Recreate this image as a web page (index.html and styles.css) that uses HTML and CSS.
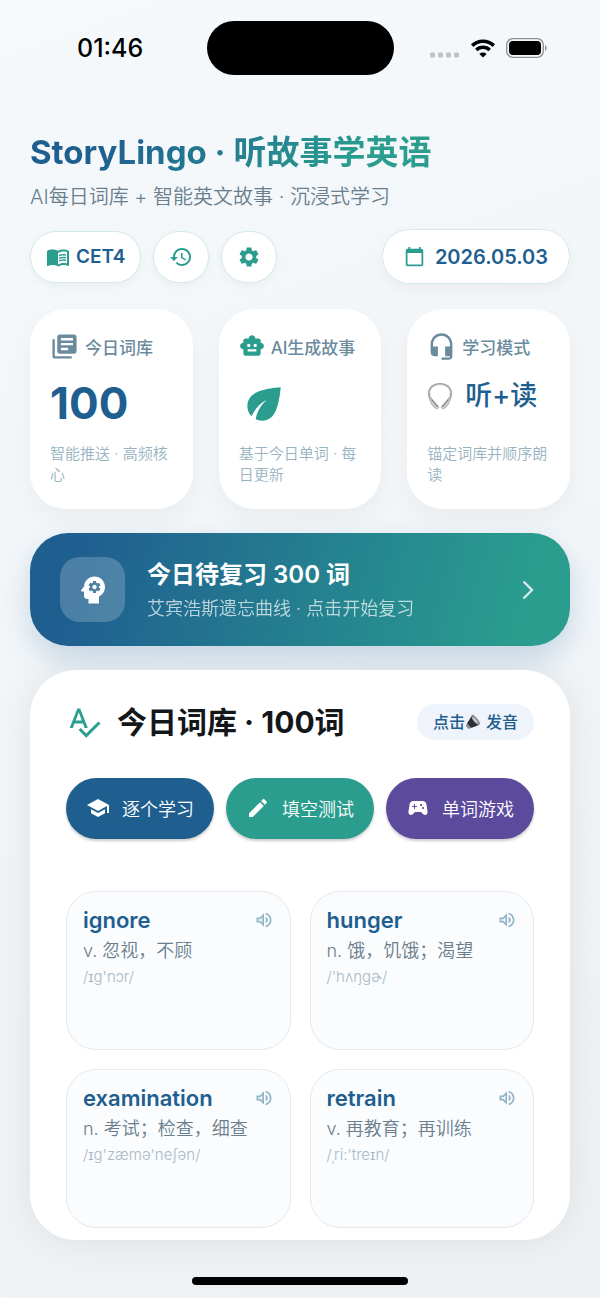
FILE: index.html
```html
<!DOCTYPE html>
<html lang="zh-CN">
<head>
    <meta charset="UTF-8">
    <meta name="viewport" content="width=device-width, initial-scale=1.0">
    <title>StoryLingo</title>
    <link rel="stylesheet" href="styles.css">
</head>
<body>
    <svg class="sprite" aria-hidden="true">
        <symbol id="speaker" viewBox="0 0 24 24">
            <path d="M3 9v6h4l5 5V4L7 9H3zm7-.17v6.34L7.83 13H5v-2h2.83L10 8.83zM16.5 12c0-1.77-1.02-3.29-2.5-4.03v8.05c1.48-.73 2.5-2.25 2.5-4.02zM14 3.23v2.06c2.89.86 5 3.54 5 6.71s-2.11 5.85-5 6.71v2.06c4.01-.91 7-4.49 7-8.77s-2.99-7.86-7-8.77z"/>
        </symbol>
    </svg>

    <div class="status-bar">
        <span class="time">01:46</span>
        <span class="island"></span>
        <span class="status-icons">
            <svg class="signal" viewBox="0 0 30 6">
                <rect x="0" y="0.5" width="5" height="5" rx="1.5"/>
                <rect x="8" y="0.5" width="5" height="5" rx="1.5"/>
                <rect x="16" y="0.5" width="5" height="5" rx="1.5"/>
                <rect x="24" y="0.5" width="5" height="5" rx="1.5"/>
            </svg>
            <svg class="wifi" viewBox="0 0 26 20">
                <path d="M2.2 7.6a15.5 15.5 0 0 1 21.6 0" fill="none" stroke="#000" stroke-width="3.6"/>
                <path d="M6.3 12a9.6 9.6 0 0 1 13.4 0" fill="none" stroke="#000" stroke-width="3.4"/>
                <path d="M13 19.5l-3.6-3.6a5.2 5.2 0 0 1 7.2 0z"/>
            </svg>
            <svg class="battery" viewBox="0 0 41 20">
                <rect x=".7" y=".7" width="36.6" height="18.6" rx="6" fill="none" stroke="#8d9093" stroke-width="1.3"/>
                <rect x="3" y="3" width="32" height="14" rx="4"/>
                <path d="M39 7c2.2 1 2.2 5 0 6z" fill="#8d9093"/>
            </svg>
        </span>
    </div>

    <main class="container">
        <h1>StoryLingo · 听故事学英语</h1>
        <p class="subtitle">AI每日词库 + 智能英文故事 · 沉浸式学习</p>

        <div class="toolbar">
            <button class="chip">
                <svg class="icon-m" viewBox="0 0 24 24"><path d="M21 5c-1.11-.35-2.33-.5-3.5-.5-1.95 0-4.05.4-5.5 1.5-1.45-1.1-3.55-1.5-5.5-1.5S2.45 4.9 1 6v14.65c0 .25.25.5.5.5.1 0 .15-.05.25-.05C3.1 20.45 5.05 20 6.5 20c1.95 0 4.05.4 5.5 1.5 1.35-.85 3.8-1.5 5.5-1.5 1.65 0 3.35.3 4.75 1.05.1.05.15.05.25.05.25 0 .5-.25.5-.5V6c-.6-.45-1.25-.75-2-1zm0 13.5c-1.1-.35-2.3-.5-3.5-.5-1.7 0-4.15.65-5.5 1.5V8c1.35-.85 3.8-1.5 5.5-1.5 1.2 0 2.4.15 3.5.5v11.5z"/><path d="M17.5 10.5c.88 0 1.73.09 2.5.26V9.24c-.79-.15-1.64-.24-2.5-.24-1.7 0-3.24.29-4.5.83v1.66c1.13-.64 2.7-.99 4.5-.99zM13 12.49v1.66c1.13-.64 2.7-.99 4.5-.99.88 0 1.73.09 2.5.26V11.9c-.79-.15-1.64-.24-2.5-.24-1.7 0-3.24.3-4.5.83zm4.5 1.84c-1.7 0-3.24.29-4.5.83v1.66c1.13-.64 2.7-.99 4.5-.99.88 0 1.73.09 2.5.26v-1.52c-.79-.16-1.64-.24-2.5-.24z"/></svg>
                CET4
            </button>
            <button class="chip chip-round" aria-label="历史">
                <svg class="icon-m" viewBox="0 0 24 24"><path d="M13 3c-4.97 0-9 4.03-9 9H1l3.89 3.89.07.14L9 12H6c0-3.87 3.13-7 7-7s7 3.13 7 7-3.13 7-7 7c-1.93 0-3.68-.79-4.94-2.06l-1.42 1.42C8.27 19.99 10.51 21 13 21c4.97 0 9-4.03 9-9s-4.03-9-9-9zm-1 5v5l4.28 2.54.72-1.21-3.5-2.08V8H12z"/></svg>
            </button>
            <button class="chip chip-round" aria-label="设置">
                <svg class="icon-m" viewBox="0 0 24 24"><path d="M19.14 12.94c.04-.3.06-.61.06-.94 0-.32-.02-.64-.07-.94l2.03-1.58c.18-.14.23-.41.12-.61l-1.92-3.32c-.12-.22-.37-.29-.59-.22l-2.39.96c-.5-.38-1.03-.7-1.62-.94l-.36-2.54c-.04-.24-.24-.41-.48-.41h-3.84c-.24 0-.43.17-.47.41l-.36 2.54c-.59.24-1.13.57-1.62.94l-2.39-.96c-.22-.08-.47 0-.59.22L2.74 8.87c-.12.21-.08.47.12.61l2.03 1.58c-.05.3-.09.63-.09.94s.02.64.07.94l-2.03 1.58c-.18.14-.23.41-.12.61l1.92 3.32c.12.22.37.29.59.22l2.39-.96c.5.38 1.03.7 1.62.94l.36 2.54c.05.24.24.41.48.41h3.84c.24 0 .44-.17.47-.41l.36-2.54c.59-.24 1.13-.56 1.62-.94l2.39.96c.22.08.47 0 .59-.22l1.92-3.32c.12-.22.07-.47-.12-.61l-2.01-1.58zM12 15.6c-1.98 0-3.6-1.62-3.6-3.6s1.62-3.6 3.6-3.6 3.6 1.62 3.6 3.6-1.62 3.6-3.6 3.6z"/></svg>
            </button>
            <button class="chip chip-date">
                <svg class="icon-s" viewBox="0 0 24 24"><path d="M20 3h-1V1h-2v2H7V1H5v2H4c-1.1 0-2 .9-2 2v16c0 1.1.9 2 2 2h16c1.1 0 2-.9 2-2V5c0-1.1-.9-2-2-2zm0 18H4V8h16v13z"/></svg>
                2026.05.03
            </button>
        </div>

        <div class="stats">
            <section class="stat">
                <h2>
                    <svg class="icon-l" viewBox="0 0 24 24"><path d="M4 6H2v14c0 1.1.9 2 2 2h14v-2H4V6zm16-4H8c-1.1 0-2 .9-2 2v12c0 1.1.9 2 2 2h12c1.1 0 2-.9 2-2V4c0-1.1-.9-2-2-2zm-1 9H9V9h10v2zm-4 4H9v-2h6v2zm4-8H9V5h10v2z"/></svg>
                    今日词库
                </h2>
                <div class="number">100</div>
                <p>智能推送 · 高频核心</p>
            </section>
            <section class="stat">
                <h2>
                    <svg class="icon-ml green" viewBox="0 0 24 24"><path d="M20 9V7c0-1.1-.9-2-2-2h-3c0-1.66-1.34-3-3-3S9 3.34 9 5H6c-1.1 0-2 .9-2 2v2c-1.66 0-3 1.34-3 3s1.34 3 3 3v4c0 1.1.9 2 2 2h12c1.1 0 2-.9 2-2v-4c1.66 0 3-1.34 3-3s-1.34-3-3-3zM7.5 11.5c0-.83.67-1.5 1.5-1.5s1.5.67 1.5 1.5S9.83 13 9 13s-1.5-.67-1.5-1.5zM16 17H8v-2h8v2zm-1-4c-.83 0-1.5-.67-1.5-1.5S14.17 10 15 10s1.5.67 1.5 1.5S15.83 13 15 13z"/></svg>
                    AI生成故事
                </h2>
                <div class="number">
                    <svg class="leaf green" viewBox="0 0 24 24"><path d="M6.05 8.05c-2.73 2.73-2.73 7.15-.02 9.88 1.47-3.4 4.09-6.24 7.36-7.93-2.77 2.34-4.71 5.61-5.39 9.32 2.6 1.23 5.8.78 7.95-1.37C19.43 14.47 20 4 20 4S9.53 4.57 6.05 8.05z"/></svg>
                </div>
                <p>基于今日单词 · 每日更新</p>
            </section>
            <section class="stat">
                <h2>
                    <svg class="icon-l" viewBox="0 0 24 24"><path d="M12 1c-4.97 0-9 4.03-9 9v7c0 1.66 1.34 3 3 3h3v-8H5v-2c0-3.87 3.13-7 7-7s7 3.13 7 7v2h-4v8h4v1h-7v2h6c1.66 0 3-1.34 3-3V10c0-4.97-4.03-9-9-9z"/></svg>
                    学习模式
                </h2>
                <div class="mode">
                    <svg class="headphones" viewBox="0 0 26 28">
                        <path d="M3.2 17C-1 8 5 1.8 13 1.8S27 8 22.8 17" fill="none" stroke="#a3a3a3" stroke-width="1.8"/>
                        <path d="M4.5 16C1 8.5 6.5 3 13 3s12 5.5 8.5 13" fill="none" stroke="#e2e2e2" stroke-width=".8"/>
                        <path d="M3.4 15.2l8 9.3c.8 1-.8 2.7-2 2.2-3.5-1.5-6-6-6.8-10.2z" fill="#d3d3d3" stroke="#9a9a9a" stroke-width=".8"/>
                        <path d="M22.6 15.2l-8 9.3c-.8 1 .8 2.7 2 2.2 3.5-1.5 6-6 6.8-10.2z" fill="#d3d3d3" stroke="#9a9a9a" stroke-width=".8"/>
                        <path d="M4.5 17.5l6 7.5M21.5 17.5l-6 7.5" stroke="#858585" stroke-width="1.2"/>
                    </svg>
                    听+读
                </div>
                <p>锚定词库并顺序朗读</p>
            </section>
        </div>

        <a class="review" href="#">
            <span class="review-icon">
                <svg class="icon-xl" viewBox="0 0 24 24"><path d="M13 8.57c-.79 0-1.43.64-1.43 1.43s.64 1.43 1.43 1.43 1.43-.64 1.43-1.43-.64-1.43-1.43-1.43z"/><path d="M13 3C9.25 3 6.2 5.94 6.02 9.64L4.1 12.2c-.25.33-.01.8.4.8H6v3c0 1.1.9 2 2 2h1v3h7v-4.68c2.36-1.12 4-3.53 4-6.32 0-3.87-3.13-7-7-7zm3 7c0 .13-.01.26-.02.39l.83.66c.08.06.1.16.05.25l-.8 1.39c-.05.09-.16.12-.24.09l-.99-.4c-.21.16-.43.29-.67.39L14 13.83c-.01.1-.1.17-.2.17h-1.6c-.1 0-.18-.07-.2-.17l-.15-1.06c-.25-.1-.47-.23-.68-.39l-.99.4c-.09.03-.2 0-.25-.09l-.8-1.39c-.05-.08-.03-.19.05-.25l.84-.66c-.01-.13-.02-.26-.02-.39s.02-.27.04-.39l-.85-.66c-.08-.06-.1-.16-.05-.26l.8-1.38c.05-.09.15-.12.24-.09l1 .4c.2-.15.43-.29.67-.39L12 6.17c.02-.1.1-.17.2-.17h1.6c.1 0 .18.07.2.17l.15 1.06c.24.1.46.23.67.39l1-.4c.09-.03.2 0 .24.09l.8 1.38c.05.09.03.2-.05.26l-.85.66c.03.12.04.25.04.39z"/></svg>
            </span>
            <span class="review-text">
                <strong>今日待复习 300 词</strong>
                <small>艾宾浩斯遗忘曲线 · 点击开始复习</small>
            </span>
            <svg class="arrow" viewBox="0 0 12 20"><path d="M1.5 1.5L10 10l-8.5 8.5" fill="none" stroke="currentColor" stroke-width="2.4"/></svg>
        </a>

        <section class="panel">
            <header class="panel-head">
                <svg class="spell green" viewBox="0 0 24 24"><path d="M12.45 16h2.09L9.43 3H7.57L2.46 16h2.09l1.12-3h5.64l1.14 3zm-6.02-5L8.5 5.48 10.57 11H6.43zm15.16.59l-8.09 8.09L9.83 16l-1.41 1.41 5.09 5.09L23 13l-1.41-1.41z"/></svg>
                <h2>今日词库 · 100词</h2>
                <span class="hint">点击<svg class="hint-icon" viewBox="0 0 16 16">
                        <path d="M7 .5c1.5-.8 8.500 6.5 8 9.5-.3 1.5-2.500 1-4.500-1C8 6.500 5.500 1.500 7 .5z" fill="#8b8f93"/>
                        <path d="M6.500 2L2 9.500 6 14l8-3C10.500 10 7 6 6.500 2z" fill="#2e3033"/>
                        <path d="M2 9.500L.8 11.800 3.500 15 6 14z" fill="#85898d"/>
                        <path d="M8 4l4.500 4.500" stroke="#d5d8da" stroke-width="1.500"/>
                    </svg> 发音</span>
            </header>

            <div class="actions">
                <button class="action blue">
                    <svg class="icon-m" viewBox="0 0 24 24"><path d="M5 13.18v4L12 21l7-3.82v-4L12 17l-7-3.82zM12 3L1 9l11 6 9-4.91V17h2V9L12 3z"/></svg>
                    逐个学习
                </button>
                <button class="action teal">
                    <svg class="icon-m" viewBox="0 0 24 24"><path d="M3 17.25V21h3.75L17.81 9.94l-3.75-3.75L3 17.25zM20.71 7.04c.39-.39.39-1.02 0-1.41l-2.34-2.34c-.39-.39-1.02-.39-1.41 0l-1.83 1.83 3.75 3.75 1.83-1.83z"/></svg>
                    填空测试
                </button>
                <button class="action purple">
                    <svg class="icon-m" viewBox="0 0 24 24"><path d="M21.58 16.09l-1.09-7.66C20.21 6.46 18.52 5 16.53 5H7.47C5.48 5 3.79 6.46 3.51 8.43l-1.09 7.66C2.2 17.63 3.39 19 4.94 19c.68 0 1.32-.27 1.8-.75L9 16h6l2.25 2.25c.48.48 1.13.75 1.8.75 1.56 0 2.75-1.37 2.53-2.91zM11 11H9v2H8v-2H6v-1h2V8h1v2h2v1zm4-1c-.55 0-1-.45-1-1s.45-1 1-1 1 .45 1 1-.45 1-1 1zm2 3c-.55 0-1-.45-1-1s.45-1 1-1 1 .45 1 1-.45 1-1 1z"/></svg>
                    单词游戏
                </button>
            </div>

            <div class="words">
                <article class="word">
                    <div class="word-head">
                        <h3>ignore</h3>
                        <button class="speak" aria-label="ignore"><svg class="icon-xs"><use href="#speaker"/></svg></button>
                    </div>
                    <p class="meaning">v. 忽视，不顾</p>
                    <p class="phonetic">/ɪg'nɔr/</p>
                </article>
                <article class="word">
                    <div class="word-head">
                        <h3>hunger</h3>
                        <button class="speak" aria-label="hunger"><svg class="icon-xs"><use href="#speaker"/></svg></button>
                    </div>
                    <p class="meaning">n. 饿，饥饿；渴望</p>
                    <p class="phonetic">/'hʌŋgɚ/</p>
                </article>
                <article class="word">
                    <div class="word-head">
                        <h3>examination</h3>
                        <button class="speak" aria-label="examination"><svg class="icon-xs"><use href="#speaker"/></svg></button>
                    </div>
                    <p class="meaning">n. 考试；检查，细查</p>
                    <p class="phonetic">/ɪg'zæmə'neʃən/</p>
                </article>
                <article class="word">
                    <div class="word-head">
                        <h3>retrain</h3>
                        <button class="speak" aria-label="retrain"><svg class="icon-xs"><use href="#speaker"/></svg></button>
                    </div>
                    <p class="meaning">v. 再教育；再训练</p>
                    <p class="phonetic">/ˌri:'treɪn/</p>
                </article>
            </div>
        </section>
    </main>

    <div class="home-indicator"></div>
</body>
</html>
```
FILE: styles.css
```css
* {
    box-sizing: border-box;
}
body {
    margin: 0;
    font-family: Inter, "Noto Sans CJK SC", sans-serif;
    background: linear-gradient(160deg, #f5f9fc, #edf1f4);
    color: #14171a;
}
h1, h2, h3, p {
    margin: 0;
}
button {
    font-family: inherit;
    border: none;
    cursor: pointer;
}
svg {
    fill: currentColor;
    flex-shrink: 0;
}
.sprite {
    display: none;
}
.green {
    color: #2a9d8f;
}

/* Icon sizes */
.icon-xs { width: 20px; height: 20px; }
.icon-s { width: 21px; height: 21px; }
.icon-m { width: 24px; height: 24px; }
.icon-ml { width: 26px; height: 26px; }
.icon-l { width: 29px; height: 29px; }
.icon-xl { width: 36px; height: 36px; }

/* Phone status bar */
.status-bar {
    display: grid;
    grid-template-columns: 1fr 187px 1fr;
    align-items: center;
    padding-top: 21px;
    color: #000;
}
.time {
    padding-left: 77px;
    font-size: 25px;
    font-weight: 500;
}
.island {
    height: 54px;
    border-radius: 27px;
    background: #000;
}
.status-icons {
    display: flex;
    align-items: center;
    justify-content: flex-end;
    gap: 10px;
    padding-right: 53px;
}
.signal {
    width: 30px;
    height: 6px;
    margin-top: 13px;
    fill: #bfc2c5;
}
.wifi { width: 26px; height: 20px; }
.battery { width: 41px; height: 20px; }

/* Header */
.container {
    padding: 57px 30px 0;
}
h1 {
    width: fit-content;
    font-size: 33px;
    line-height: 40px;
    font-weight: 700;
    background: linear-gradient(135deg, #1f5f90 20%, #2a9d8f 80%);
    background-clip: text;
    -webkit-background-clip: text;
    color: transparent;
}
.subtitle {
    margin-top: 13px;
    font-size: 20px;
    line-height: 24px;
    font-weight: 350;
    color: #6a7e8d;
}
.toolbar {
    display: flex;
    align-items: center;
    gap: 12px;
    margin-top: 20px;
}
.chip {
    display: flex;
    align-items: center;
    justify-content: center;
    gap: 6px;
    height: 52px;
    padding: 0 15px;
    border: 1px solid #d3ebe8;
    border-radius: 28px;
    background: #fff;
    box-shadow: 0 3px 8px rgba(0, 0, 0, 0.04);
    color: #1f5f90;
    font-size: 19px;
    font-weight: 600;
}
.chip svg {
    color: #2a9d8f;
}
.chip-round {
    width: 56px;
    padding: 0;
}
.chip-date {
    height: 55px;
    margin-left: auto;
    padding: 0 21px;
    gap: 10px;
    box-shadow: 0 6px 16px rgba(0, 0, 0, 0.04);
    font-size: 20px;
}

/* Stat cards */
.stats {
    display: grid;
    grid-template-columns: repeat(3, 1fr);
    gap: 26px;
    margin-top: 25px;
}
.stat {
    display: flex;
    flex-direction: column;
    min-height: 200px;
    padding: 22px 12px 24px 20px;
    border-radius: 36px;
    background: #fff;
    box-shadow: 0 10px 24px rgba(0, 0, 0, 0.04);
}
.stat h2 {
    display: flex;
    align-items: center;
    gap: 6px;
    height: 30px;
    font-size: 17px;
    font-weight: 500;
    color: #6b8a9d;
    white-space: nowrap;
}
.number {
    height: 48px;
    margin-top: 18px;
    font-size: 44px;
    line-height: 48px;
    font-weight: 700;
    color: #1f5f90;
}
.leaf {
    display: block;
    width: 50px;
    height: 50px;
}
.mode {
    display: flex;
    align-items: center;
    gap: 12px;
    margin-top: 20px;
    font-size: 27px;
    line-height: 30px;
    font-weight: 500;
    color: #1f5f90;
}
.headphones {
    width: 26px;
    height: 28px;
}
.stat p {
    margin-top: auto;
    font-size: 15px;
    line-height: 21px;
    font-weight: 350;
    color: #97b3c2;
}

/* Review banner */
.review {
    display: flex;
    align-items: center;
    gap: 22px;
    margin-top: 24px;
    padding: 24px 36px 24px 30px;
    border-radius: 38px;
    background: linear-gradient(105deg, #1f5f90 10%, #2a9d8f 90%);
    box-shadow: 0 12px 28px rgba(31, 95, 144, 0.2);
    color: #fff;
    text-decoration: none;
}
.review-icon {
    display: grid;
    place-items: center;
    width: 65px;
    height: 65px;
    border-radius: 20px;
    background: rgba(255, 255, 255, 0.2);
}
.review-text {
    display: flex;
    flex-direction: column;
    flex: 1;
    gap: 6px;
    padding-top: 3px;
}
.review-text strong {
    font-size: 24px;
    line-height: 30px;
    font-weight: 600;
}
.review-text small {
    font-size: 18px;
    line-height: 26px;
    font-weight: 350;
    opacity: 0.7;
}
.arrow {
    width: 12px;
    height: 20px;
    opacity: 0.8;
}

/* Word list panel */
.panel {
    margin-top: 24px;
    padding: 33px 36px 12px;
    border-radius: 46px;
    background: #fff;
    box-shadow: 0 0 36px rgba(0, 0, 0, 0.08);
}
.panel-head {
    display: flex;
    align-items: center;
}
.spell {
    width: 36px;
    height: 36px;
}
.panel-head h2 {
    margin-left: 15px;
    font-size: 30px;
    line-height: 38px;
    font-weight: 700;
}
.hint {
    display: flex;
    align-items: center;
    margin-left: auto;
    padding: 0 16px;
    border-radius: 18px;
    background: #eff3fb;
    color: #1f5f90;
    font-size: 16px;
    line-height: 36px;
    font-weight: 500;
}
.hint-icon {
    width: 16px;
    height: 16px;
    margin-right: 5px;
}
.actions {
    display: grid;
    grid-template-columns: repeat(3, 1fr);
    gap: 12px;
    margin-top: 37px;
}
.action {
    display: flex;
    align-items: center;
    justify-content: center;
    gap: 12px;
    height: 61px;
    padding: 0 0 2px;
    border-radius: 31px;
    box-shadow: 0 2px 3px rgba(0, 0, 0, 0.2);
    color: #fff;
    font-size: 18px;
    font-weight: 350;
    white-space: nowrap;
}
.blue { background: #1f5f90; }
.teal { background: #2a9d8f; }
.purple { background: #5c4a9c; }

.words {
    display: grid;
    grid-template-columns: repeat(2, 1fr);
    gap: 19px;
    margin-top: 52px;
}
.word {
    min-height: 159px;
    padding: 13px 16px;
    border: 1px solid #e3e9ee;
    border-radius: 30px;
    background: #fafcfe;
}
.word-head {
    display: flex;
    align-items: center;
    justify-content: space-between;
}
.word h3 {
    font-size: 22px;
    line-height: 30px;
    font-weight: 600;
    color: #1f5f90;
}
.speak {
    display: flex;
    padding: 0;
    background: none;
    color: #8fb6c6;
}
.meaning {
    margin-top: 2px;
    font-size: 18px;
    line-height: 28px;
    font-weight: 350;
    color: #6a7e8d;
}
.phonetic {
    margin-top: 1px;
    font-size: 15px;
    line-height: 22px;
    font-weight: 350;
    color: #a9b9c5;
}

.home-indicator {
    width: 36%;
    height: 8px;
    margin: 37px auto 12px;
    border-radius: 4px;
    background: #000;
}
```
